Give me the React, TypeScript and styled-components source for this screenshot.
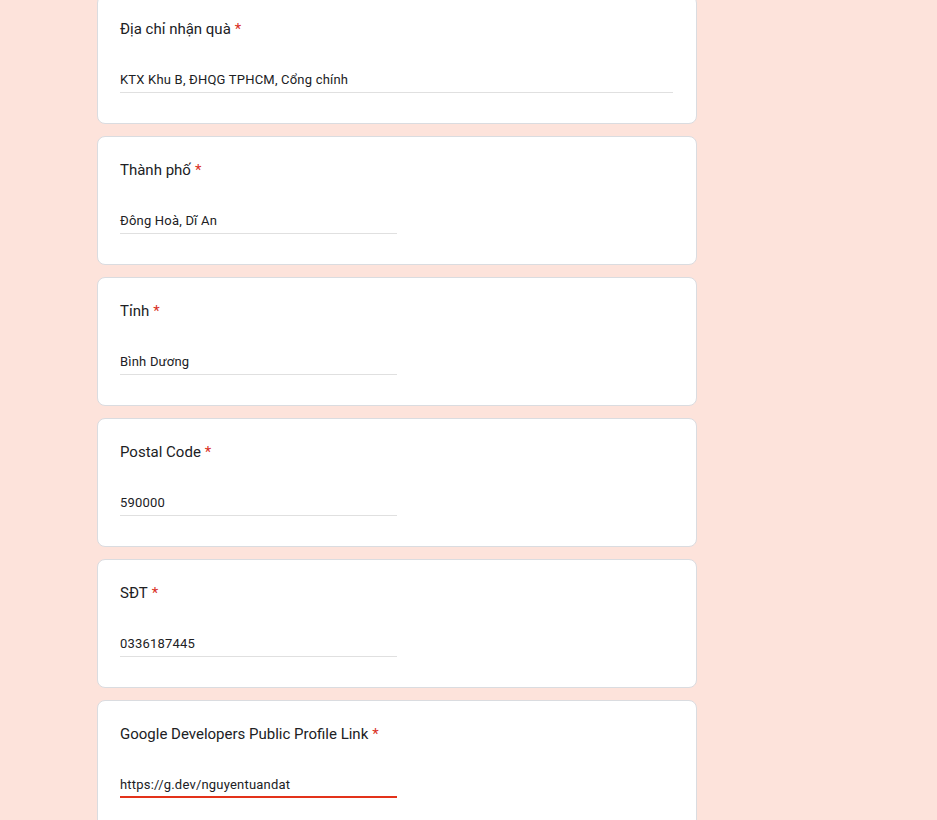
import React from "react";
import styled, { createGlobalStyle } from "styled-components";

const GlobalStyle = createGlobalStyle`
  html, body { margin: 0; padding: 0; background: #fde3db; }
  body { font-family: Roboto, "Noto Sans", Arial, sans-serif; }
`;

const Page = styled.div`
  width: 600px;
  margin: -5px 0 0 97px;
  display: flex;
  flex-direction: column;
  gap: 12px;
`;

const Card = styled.div`
  background: #fff;
  border: 1px solid #dadce0;
  border-radius: 8px;
  padding: 21px 23px 0 22px;
  box-sizing: border-box;
  height: 129px;
`;

const Title = styled.div`
  font-size: 15px;
  line-height: 24px;
  letter-spacing: 0;
  color: #202124;
  font-weight: 400;
`;

const Star = styled.span`
  color: #d93025;
  padding-left: 4px;
`;

const Field = styled.div<{ $full?: boolean; $active?: boolean }>`
  margin-top: 18px;
  width: ${(p) => (p.$full ? "100%" : "50%")};
  box-sizing: border-box;
  padding: 11px 0 ${(p) => (p.$active ? "1px" : "2px")};
  border-bottom: ${(p) => (p.$active ? "2px solid #e3321a" : "1px solid #e0e0e0")};
  font-size: 13px;
  line-height: 20px;
  letter-spacing: 0.2px;
  color: #202124;
`;

const fields = [
  { label: "Địa chỉ nhận quà", value: "KTX Khu B, ĐHQG TPHCM, Cổng chính", full: true },
  { label: "Thành phố", value: "Đông Hoà, Dĩ An" },
  { label: "Tỉnh", value: "Bình Dương" },
  { label: "Postal Code", value: "590000" },
  { label: "SĐT", value: "0336187445" },
  { label: "Google Developers Public Profile Link", value: "https://g.dev/nguyentuandat", active: true },
];

export default function App() {
  return (
    <>
      <GlobalStyle />
      <Page>
        {fields.map((f) => (
          <Card key={f.label}>
            <Title>
              {f.label}
              <Star>*</Star>
            </Title>
            <Field $full={f.full} $active={f.active}>
              {f.value}
            </Field>
          </Card>
        ))}
      </Page>
    </>
  );
}
